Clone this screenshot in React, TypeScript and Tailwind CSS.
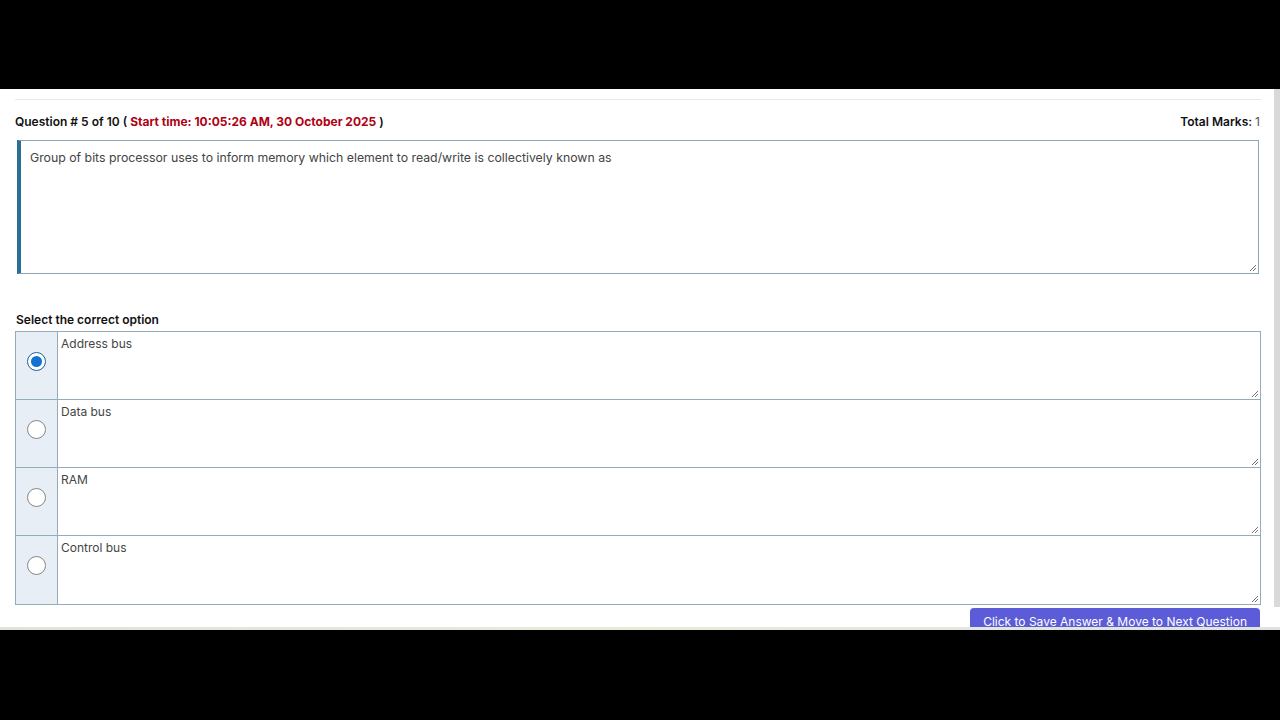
import * as React from "react";

const options = ["Address bus", "Data bus", "RAM", "Control bus"];

const ResizeGrip = () => (
  <svg
    width="7"
    height="7"
    viewBox="0 0 7 7"
    className="absolute bottom-[2px] right-[2px]"
  >
    <path d="M1 7 L7 1 M4 7 L7 4" stroke="#707070" strokeWidth="1" />
  </svg>
);

const Radio = ({ checked }: { checked?: boolean }) =>
  checked ? (
    <div className="flex h-[19px] w-[19px] items-center justify-center rounded-full border-[1.5px] border-[#1e5f9e] bg-white">
      <div className="h-[11px] w-[11px] rounded-full bg-[#1273cf]" />
    </div>
  ) : (
    <div className="h-[19px] w-[19px] rounded-full border border-[#858585] bg-white" />
  );

const OptionRow = ({ label, checked }: { label: string; checked?: boolean }) => (
  <div className="flex h-[68px] border-b border-[#94abb9] last:border-b-0">
    <div className="flex w-[42px] shrink-0 justify-center border-r border-[#94abb9] bg-[#e8eef6] pt-[20px]">
      <Radio checked={checked} />
    </div>
    <div className="relative flex-1 px-[3px] pt-[5px] text-[12px] leading-[14px] text-[#454545]">
      {label}
      <ResizeGrip />
    </div>
  </div>
);

export default function App() {
  return (
    <div
      className="flex h-screen w-full flex-col bg-black"
      style={{ fontFamily: "Inter, 'Noto Sans', sans-serif" }}
    >
      <div className="h-[89px] shrink-0" />
      <div className="flex h-[541px] shrink-0 flex-col bg-white">
        <div className="flex min-h-0 flex-1 overflow-hidden">
          <div className="min-w-0 flex-1 pl-[15px] pr-[13px] pt-[10px]">
            <div className="border-t border-[#e8e8e8] pt-[13px]">
              <div className="flex h-[18px] items-center justify-between text-[12px] font-semibold text-[#111]">
                <div>
                  Question # 5 of 10 ({" "}
                  <span className="font-bold text-[#b00012]">
                    Start time: 10:05:26 AM, 30 October 2025
                  </span>{" "}
                  )
                </div>
                <div className="pr-[1px]">
                  Total Marks: <span className="font-normal text-[#555]">1</span>
                </div>
              </div>
            </div>

            <div className="mt-[9px] px-[2px]">
              <div className="relative h-[134px] border border-l-4 border-[#8ea6b3] border-l-[#2b6f94] pl-[9px] pt-[10px] text-[12.3px] leading-[14px] text-[#444]">
                Group of bits processor uses to inform memory which element to
                read/write is collectively known as
                <ResizeGrip />
              </div>
            </div>

            <div className="mt-[37px] h-[18px] pl-[1px] text-[12px] leading-[18px] font-semibold text-[#111]">
              Select the correct option
            </div>

            <div className="mt-[2px] border border-[#94abb9]">
              {options.map((o, i) => (
                <OptionRow key={o} label={o} checked={i === 0} />
              ))}
            </div>

            <div className="mt-[3px] flex justify-end pr-[1px]">
              <button className="h-[27px] rounded-t-[4px] bg-[#5c5cd8] px-[13px] text-[12px] leading-[16px] text-white">
                Click to Save Answer &amp; Move to Next Question
              </button>
            </div>
          </div>
          <div className="w-[6px] shrink-0">
            <div className="h-[518px] bg-[#d9d9d9]" />
          </div>
        </div>
        <div className="h-[3px] shrink-0 bg-gradient-to-r from-[#dfe3dc] via-[#e6ebd8] to-[#e0e2e0]" />
      </div>
      <div className="flex-1" />
    </div>
  );
}
